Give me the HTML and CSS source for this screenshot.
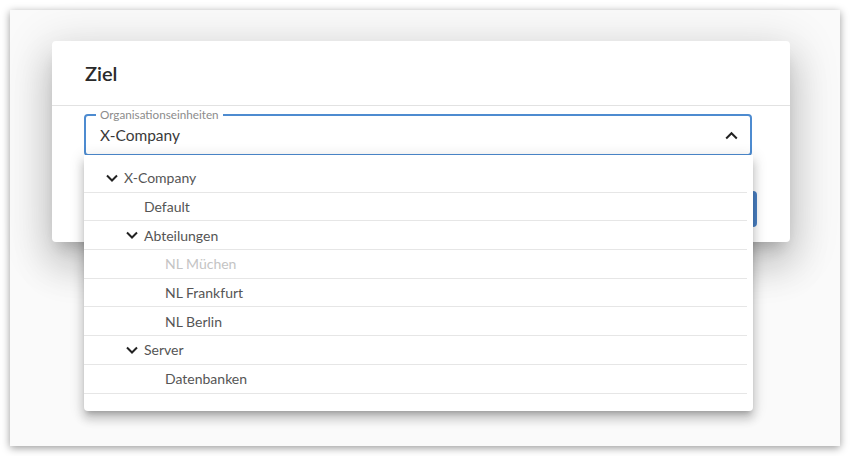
FILE: index.html
```html
<!DOCTYPE html>
<html lang="de">
<head>
<meta charset="utf-8">
<title>Ziel</title>
<link rel="stylesheet" href="styles.css">
</head>
<body>
<div class="screen">
  <div class="dialog">
    <div class="dialog-header"><h2 class="dialog-title">Ziel</h2></div>
    <div class="dialog-body">
      <div class="field">
        <span class="field-label">Organisationseinheiten</span>
        <span class="field-value">X-Company</span>
        <svg class="field-arrow" width="13" height="9" viewBox="0 0 13 9"><path d="M1.2 7.5 L6.5 2.2 L11.8 7.5" fill="none" stroke="#222" stroke-width="2"/></svg>
        <div class="dropdown">
          <ul class="tree">
            <li class="node lvl0"><span class="toggle"><svg width="12" height="8" viewBox="0 0 12 8"><path d="M1 1.5 L6 6.5 L11 1.5" fill="none" stroke="#222" stroke-width="2"/></svg></span><span class="name">X-Company</span></li>
            <li class="node lvl1"><span class="toggle"></span><span class="name">Default</span></li>
            <li class="node lvl1"><span class="toggle"><svg width="12" height="8" viewBox="0 0 12 8"><path d="M1 1.5 L6 6.5 L11 1.5" fill="none" stroke="#222" stroke-width="2"/></svg></span><span class="name">Abteilungen</span></li>
            <li class="node lvl2 disabled"><span class="toggle"></span><span class="name">NL Müchen</span></li>
            <li class="node lvl2"><span class="toggle"></span><span class="name">NL Frankfurt</span></li>
            <li class="node lvl2"><span class="toggle"></span><span class="name">NL Berlin</span></li>
            <li class="node lvl1"><span class="toggle"><svg width="12" height="8" viewBox="0 0 12 8"><path d="M1 1.5 L6 6.5 L11 1.5" fill="none" stroke="#222" stroke-width="2"/></svg></span><span class="name">Server</span></li>
            <li class="node lvl2"><span class="toggle"></span><span class="name">Datenbanken</span></li>
          </ul>
        </div>
      </div>
    </div>
    <div class="dialog-actions">
      <button class="btn-primary" aria-label="Übernehmen"></button>
    </div>
  </div>
</div>
</body>
</html>
```

FILE: styles.css
```css
html, body {
  margin: 0;
  padding: 0;
  background: #ffffff;
}

body {
  font-family: Lato, "Open Sans", sans-serif;
  color: #333;
}

.screen {
  position: relative;
  margin: 10px;
  width: 830px;
  height: 436px;
  background: #fafafa;
  box-shadow: 0 2px 8px rgba(0, 0, 0, 0.4);
}

.dialog {
  position: absolute;
  left: 42px;
  top: 31px;
  width: 738px;
  height: 201px;
  background: #fff;
  border-radius: 4px;
  box-shadow: 0 11px 15px -7px rgba(0,0,0,.2), 0 24px 38px 3px rgba(0,0,0,.14), 0 9px 46px 8px rgba(0,0,0,.12);
  display: flex;
  flex-direction: column;
}

.dialog-header {
  height: 64px;
  padding: 0 33px;
  display: flex;
  align-items: center;
  border-bottom: 1px solid #e2e2e2;
}

.dialog-title {
  margin: 0;
  font-size: 20px;
  font-weight: 600;
  color: #2a2a2a;
}

.dialog-body {
  padding: 8px 38px 0 32px;
}

.field {
  position: relative;
  height: 38px;
  border: 2px solid #4d8bd0;
  border-radius: 4px;
  display: flex;
  align-items: center;
  padding: 0 14px;
}

.field-label {
  position: absolute;
  left: 10px;
  top: -9px;
  padding: 0 4px;
  background: #fff;
  font-size: 11.7px;
  line-height: 15px;
  color: #8c8c8c;
}

.field-value {
  flex: 1;
  font-size: 15.5px;
  color: #3a3a3a;
}

.field-arrow {
  margin-right: -2px;
}

.dropdown {
  position: absolute;
  left: -2px;
  top: 39px;
  width: 669px;
  background: #fff;
  border-radius: 0 0 4px 4px;
  box-shadow: 0 5px 5px -3px rgba(0,0,0,.2), 0 8px 10px 1px rgba(0,0,0,.14), 0 3px 14px 2px rgba(0,0,0,.12);
  padding: 9px 0 17px;
  z-index: 2;
}

.tree {
  list-style: none;
  margin: 0 6px 0 0;
  padding: 0;
}

.node {
  height: 27.7px;
  border-bottom: 1px solid #e6e6e6;
  display: flex;
  align-items: center;
  font-size: 14px;
  color: #555;
}

.lvl0 { padding-left: 20px; }
.lvl1 { padding-left: 40px; }
.lvl2 { padding-left: 60px; }

.toggle {
  width: 20px;
  flex: none;
  display: flex;
  align-items: center;
  padding-left: 2px;
  box-sizing: border-box;
}

.lvl2 .name {
  margin-left: 1px;
}

.disabled .name {
  color: #c4c4c4;
}

.dialog-actions {
  margin-top: auto;
  display: flex;
  justify-content: flex-end;
  padding: 0 33px 15px;
}

.btn-primary {
  width: 110px;
  height: 36px;
  border: none;
  border-radius: 4px;
  background: #4a80c4;
}
```
